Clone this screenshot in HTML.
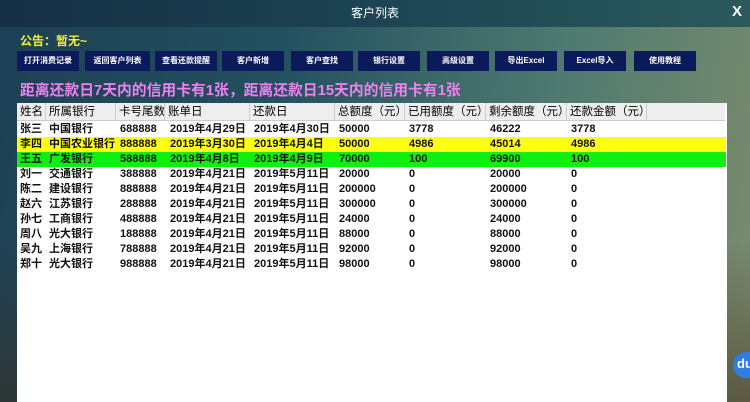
<!DOCTYPE html><html><head><meta charset="utf-8"><style>
*{margin:0;padding:0;box-sizing:border-box}
body{width:750px;height:402px;overflow:hidden;position:relative;font-family:"Liberation Sans","Noto Sans CJK SC",sans-serif;
background:linear-gradient(180deg,rgba(0,0,0,0) 0,rgba(0,0,0,0) 60%,rgba(60,40,20,.5) 100%),linear-gradient(100deg,#1e3f55 0%,#23505f 35%,#4f7a70 70%,#7d8c6e 100%);}
.title{position:absolute;left:0;top:0;width:750px;height:27px;background:linear-gradient(90deg,#152f44,#1c4452 50%,#2a5a5c);color:#fff;font-size:12px;text-align:center;line-height:27px}
.x{position:absolute;right:8px;top:3px;color:#fff;font-weight:bold;font-size:15px}
.notice{position:absolute;left:20px;top:32px;color:#f0f03a;font-weight:bold;font-size:12px}
.btn{position:absolute;top:51px;height:20px;width:62px;background:#0b1a5a;color:#fff;font-size:8px;font-weight:bold;text-align:center;line-height:20px;white-space:nowrap}
.alert{position:absolute;left:20px;top:79px;color:#f080f0;font-weight:bold;font-size:14.8px;white-space:nowrap}
.tbl{position:absolute;left:17px;top:103px;width:710px;height:299px;background:#fff}
.hdr{position:absolute;left:0;top:0;width:708px;height:18px;background:#eee;border-bottom:1px solid #ccc}
.hc{position:absolute;top:0;height:18px;border-right:1px solid #ccc;font-size:11.5px;line-height:18px;padding-left:3px;color:#000;white-space:nowrap;overflow:hidden}
.row{position:absolute;left:0;width:709px;height:15px;font-size:11px;font-weight:bold;line-height:15px;color:#111}
.row span{position:absolute;top:0;white-space:nowrap}
</style></head><body>
<div class="title">客户列表</div><div class="x">X</div>
<div class="notice">公告：暂无~</div>
<div class="btn" style="left:17px">打开消费记录</div>
<div class="btn" style="left:85px;width:65px">返回客户列表</div>
<div class="btn" style="left:155px">查看还款提醒</div>
<div class="btn" style="left:222px">客户新增</div>
<div class="btn" style="left:291px">客户查找</div>
<div class="btn" style="left:358px">银行设置</div>
<div class="btn" style="left:427px">高级设置</div>
<div class="btn" style="left:495px">导出Excel</div>
<div class="btn" style="left:564px">Excel导入</div>
<div class="btn" style="left:634px">使用教程</div>
<div class="alert">距离还款日7天内的信用卡有1张，距离还款日15天内的信用卡有1张</div>
<div class="tbl">
<div class="hdr">
<div class="hc" style="left:0;width:29px">姓名</div>
<div class="hc" style="left:29px;width:70px">所属银行</div>
<div class="hc" style="left:99px;width:49px">卡号尾数</div>
<div class="hc" style="left:148px;width:85px">账单日</div>
<div class="hc" style="left:233px;width:85px">还款日</div>
<div class="hc" style="left:318px;width:70px">总额度（元）</div>
<div class="hc" style="left:388px;width:81px">已用额度（元）</div>
<div class="hc" style="left:469px;width:81px">剩余额度（元）</div>
<div class="hc" style="left:550px;width:80px">还款金额（元）</div>
</div>
</div>
<div class="tbl" style="background:transparent">
<div class="row" style="top:19px"><span style="left:3px">张三</span><span style="left:32px">中国银行</span><span style="left:103px">688888</span><span style="left:153px">2019年4月29日</span><span style="left:237px">2019年4月30日</span><span style="left:322px">50000</span><span style="left:392px">3778</span><span style="left:473px">46222</span><span style="left:554px">3778</span></div>
<div class="row" style="top:34px;background:#ffff10"><span style="left:3px">李四</span><span style="left:32px">中国农业银行</span><span style="left:103px">888888</span><span style="left:153px">2019年3月30日</span><span style="left:237px">2019年4月4日</span><span style="left:322px">50000</span><span style="left:392px">4986</span><span style="left:473px">45014</span><span style="left:554px">4986</span></div>
<div class="row" style="top:49px;background:#10f010"><span style="left:3px">王五</span><span style="left:32px">广发银行</span><span style="left:103px">588888</span><span style="left:153px">2019年4月8日</span><span style="left:237px">2019年4月9日</span><span style="left:322px">70000</span><span style="left:392px">100</span><span style="left:473px">69900</span><span style="left:554px">100</span></div>
<div class="row" style="top:64px"><span style="left:3px">刘一</span><span style="left:32px">交通银行</span><span style="left:103px">388888</span><span style="left:153px">2019年4月21日</span><span style="left:237px">2019年5月11日</span><span style="left:322px">20000</span><span style="left:392px">0</span><span style="left:473px">20000</span><span style="left:554px">0</span></div>
<div class="row" style="top:79px"><span style="left:3px">陈二</span><span style="left:32px">建设银行</span><span style="left:103px">888888</span><span style="left:153px">2019年4月21日</span><span style="left:237px">2019年5月11日</span><span style="left:322px">200000</span><span style="left:392px">0</span><span style="left:473px">200000</span><span style="left:554px">0</span></div>
<div class="row" style="top:94px"><span style="left:3px">赵六</span><span style="left:32px">江苏银行</span><span style="left:103px">288888</span><span style="left:153px">2019年4月21日</span><span style="left:237px">2019年5月11日</span><span style="left:322px">300000</span><span style="left:392px">0</span><span style="left:473px">300000</span><span style="left:554px">0</span></div>
<div class="row" style="top:109px"><span style="left:3px">孙七</span><span style="left:32px">工商银行</span><span style="left:103px">488888</span><span style="left:153px">2019年4月21日</span><span style="left:237px">2019年5月11日</span><span style="left:322px">24000</span><span style="left:392px">0</span><span style="left:473px">24000</span><span style="left:554px">0</span></div>
<div class="row" style="top:124px"><span style="left:3px">周八</span><span style="left:32px">光大银行</span><span style="left:103px">188888</span><span style="left:153px">2019年4月21日</span><span style="left:237px">2019年5月11日</span><span style="left:322px">88000</span><span style="left:392px">0</span><span style="left:473px">88000</span><span style="left:554px">0</span></div>
<div class="row" style="top:139px"><span style="left:3px">吴九</span><span style="left:32px">上海银行</span><span style="left:103px">788888</span><span style="left:153px">2019年4月21日</span><span style="left:237px">2019年5月11日</span><span style="left:322px">92000</span><span style="left:392px">0</span><span style="left:473px">92000</span><span style="left:554px">0</span></div>
<div class="row" style="top:154px"><span style="left:3px">郑十</span><span style="left:32px">光大银行</span><span style="left:103px">988888</span><span style="left:153px">2019年4月21日</span><span style="left:237px">2019年5月11日</span><span style="left:322px">98000</span><span style="left:392px">0</span><span style="left:473px">98000</span><span style="left:554px">0</span></div>
</div>
<div style="position:absolute;left:733px;top:352px;width:30px;height:26px;border-radius:13px;background:#2f7de0;color:#fff;font-weight:bold;font-size:13px;line-height:24px;padding-left:4px">du</div>
</body></html>
